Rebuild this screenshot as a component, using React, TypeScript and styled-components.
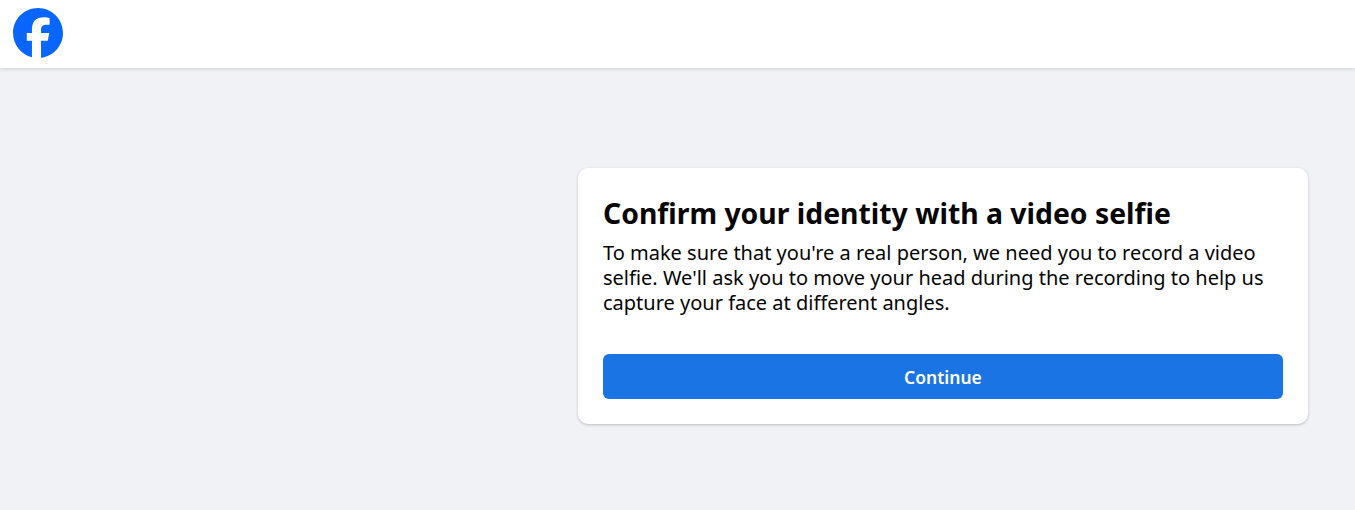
import React from 'react';
import styled, { createGlobalStyle } from 'styled-components';

const GlobalStyle = createGlobalStyle`
  html, body {
    margin: 0;
    padding: 0;
    background-color: #f0f2f5;
    font-family: "Noto Sans", "Open Sans", "Liberation Sans", sans-serif;
  }
`;

const Page = styled.div`
  min-height: 510px;
  display: flex;
  flex-direction: column;
  overflow: hidden;
`;

const TopBar = styled.header`
  height: 68px;
  box-sizing: border-box;
  padding: 8px 13px;
  background-color: #fff;
  box-shadow: 0 1px 4px rgba(0, 0, 0, 0.14);
`;

const Logo = styled.svg`
  display: block;
  width: 50px;
  height: 50px;
`;

const Main = styled.main`
  display: flex;
  justify-content: flex-end;
  padding: 100px 47px 0 0;
`;

const Card = styled.section`
  width: 730px;
  box-sizing: border-box;
  padding: 25px;
  background-color: #fff;
  border-radius: 10px;
  box-shadow: 0 1px 3px rgba(0, 0, 0, 0.22);
`;

const Title = styled.h1`
  margin: 0 0 7px;
  font-size: 28.35px;
  line-height: 40px;
  font-weight: 700;
  color: #050505;
`;

const Body = styled.p`
  margin: 0 0 39px;
  font-size: 20px;
  line-height: 25px;
  color: #050505;
`;

const PrimaryButton = styled.button`
  display: block;
  width: 100%;
  height: 45px;
  padding: 0;
  border: 0;
  border-radius: 6px;
  background-color: #1b74e4;
  color: #fff;
  font-family: inherit;
  font-size: 17.5px;
  font-weight: 600;
  cursor: pointer;
`;

export default function App() {
  return (
    <Page>
      <GlobalStyle />
      <TopBar>
        <Logo viewBox="0 0 36 36" aria-label="Facebook">
          <path
            fill="#0866ff"
            d="M20.181 35.87C29.094 34.791 36 27.202 36 18c0-9.941-8.059-18-18-18S0 8.059 0 18c0 8.442 5.811 15.526 13.652 17.471L14 34h5.5l.681 1.87Z"
          />
          <path
            fill="#fff"
            d="M13.651 35.471v-11.97H9.936V18h3.715v-2.37c0-6.127 2.772-8.964 8.784-8.964 1.138 0 3.103.223 3.91.446v4.983c-.425-.043-1.167-.065-2.081-.065-2.952 0-4.09 1.116-4.09 4.025V18h5.883l-1.008 5.5h-4.867v12.37a18.183 18.183 0 0 1-6.53-.399Z"
          />
        </Logo>
      </TopBar>
      <Main>
        <Card>
          <Title>Confirm your identity with a video selfie</Title>
          <Body>
            To make sure that you're a real person, we need you to record a video
            selfie. We'll ask you to move your head during the recording to help us
            capture your face at different angles.
          </Body>
          <PrimaryButton>Continue</PrimaryButton>
        </Card>
      </Main>
    </Page>
  );
}
